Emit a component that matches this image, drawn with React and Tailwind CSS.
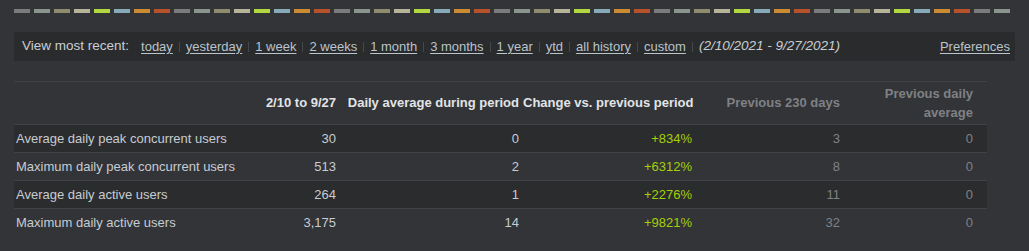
const dashColors = [
  "bg-[#7b7b7b]",
  "bg-[#8a958d]",
  "bg-[#8f8c6d]",
  "bg-[#b6b49a]",
  "bg-[#b1d93f]",
  "bg-[#88a9b7]",
  "bg-[#c98c33]",
  "bg-[#b8522a]",
];

const links = ["today", "yesterday", "1 week", "2 weeks", "1 month", "3 months", "1 year", "ytd", "all history", "custom"];

const rows = [
  ["Average daily peak concurrent users", "30", "0", "+834%", "3", "0"],
  ["Maximum daily peak concurrent users", "513", "2", "+6312%", "8", "0"],
  ["Average daily active users", "264", "1", "+2276%", "11", "0"],
  ["Maximum daily active users", "3,175", "14", "+9821%", "32", "0"],
];

const cols = "grid grid-cols-[240px_86px_183px_173px_148px_143px]";

const Sep = () => <span className="inline-block w-px h-[10px] bg-[#45474c] mx-[6px]"></span>;

export default function App() {
  return (
    <div
      className="w-full h-[251px] bg-[#323438] text-[13px] text-[#c6ccd2] overflow-hidden"
      style={{ fontFamily: '"Liberation Sans", Arial, sans-serif' }}
    >
      <div className="flex gap-1 pl-[14px] pt-[9px]">
        {Array.from({ length: 50 }).map((_, i) => (
          <div key={i} className={`w-4 h-1 ${dashColors[i % 8]}`}></div>
        ))}
      </div>

      <div className="mt-[19px] mx-[14px] h-[29px] bg-[#2a2b2d] flex items-center pl-2 pr-[5px]">
        <span className="text-[#c8ced3] mr-[12px] text-[13.5px]">View most recent:</span>
        {links.map((l) => (
          <span key={l} className="flex items-center">
            <a className="underline underline-offset-2 text-[#b9c4cc] cursor-pointer">{l}</a>
            <Sep />
          </span>
        ))}
        <span className="italic text-[#c8ced3] text-[13.5px]">(2/10/2021 - 9/27/2021)</span>
        <a className="ml-auto underline underline-offset-2 text-[#b9c4cc] cursor-pointer">Preferences</a>
      </div>

      <div className="mt-[20px] ml-[14px] w-[973px]">
        <div className={`${cols} border-t border-b border-[#404146] h-[44px] items-center font-bold text-[#e2e4e6]`}>
          <div></div>
          <div className="text-right pr-1 whitespace-nowrap">2/10 to 9/27</div>
          <div className="text-right pr-1 whitespace-nowrap">Daily average during period</div>
          <div className="text-right pr-1 whitespace-nowrap">Change vs. previous period</div>
          <div className="text-right pr-1 whitespace-nowrap text-[#7f8184]">Previous 230 days</div>
          <div className="text-right pr-[14px] pl-4 text-[#7f8184] leading-[19px]">Previous daily average</div>
        </div>
        {rows.map((r, i) => (
          <div
            key={r[0]}
            className={`${cols} h-[28px] items-center ${i < 3 ? "border-b border-[#404146]" : ""} ${i % 2 === 0 ? "bg-[#2b2c2e]" : ""}`}
          >
            <div className="pl-[2px] text-[#c6ccd2]">{r[0]}</div>
            <div className="text-right pr-1 text-[#c6ccd2]">{r[1]}</div>
            <div className="text-right pr-1 text-[#c6ccd2]">{r[2]}</div>
            <div className="text-right pr-1 text-[#a4d007]">{r[3]}</div>
            <div className="text-right pr-1 text-[#7f8184]">{r[4]}</div>
            <div className="text-right pr-[14px] text-[#7f8184]">{r[5]}</div>
          </div>
        ))}
      </div>
    </div>
  );
}
